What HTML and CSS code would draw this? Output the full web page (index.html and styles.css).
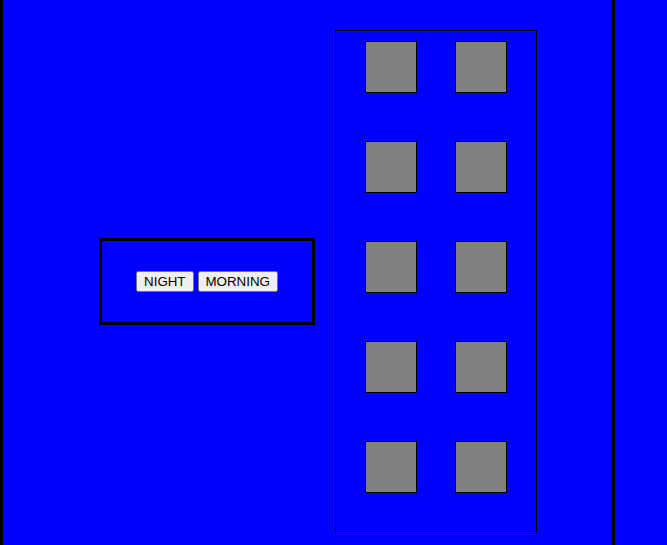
FILE: index.html
```html
<!DOCTYPE html>
<html>
<head>
<meta charset="utf-8">
<link rel="stylesheet" href="styles.css">
</head>
<body>
<div class="frame">
  <div class="panel">
    <button class="btn">NIGHT</button>
    <button class="btn">MORNING</button>
  </div>
  <div class="column">
    <div class="cell"></div><div class="cell"></div>
    <div class="cell"></div><div class="cell"></div>
    <div class="cell"></div><div class="cell"></div>
    <div class="cell"></div><div class="cell"></div>
    <div class="cell"></div><div class="cell"></div>
  </div>
</div>
</body>
</html>
```

FILE: styles.css
```css
html, body {
  margin: 0;
  padding: 0;
  background: #0000ff;
  overflow: hidden;
}

.frame {
  box-sizing: border-box;
  width: 615px;
  height: 545px;
  border-left: 3px solid #000;
  border-right: 3px solid #000;
  display: flex;
  align-items: flex-start;
  padding: 30px 0 0 96px;
  gap: 20px;
}

.panel {
  box-sizing: border-box;
  width: 216px;
  height: 87px;
  margin-top: 208px;
  border: 3px solid #000;
  display: flex;
  justify-content: center;
  align-items: center;
  gap: 4px;
}

.btn {
  font-family: "Liberation Sans", Arial, sans-serif;
  font-size: 13.333px;
}

.column {
  box-sizing: border-box;
  width: 202px;
  height: 502px;
  border: 1px solid #000;
  padding: 10px 29px 0 29px;
  display: grid;
  grid-template-columns: 52px 52px;
  grid-auto-rows: 52px;
  column-gap: 38px;
  row-gap: 48px;
  align-content: start;
}

.cell {
  box-sizing: border-box;
  width: 52px;
  height: 52px;
  border: 1px solid #000;
  background: #808080;
}
```
